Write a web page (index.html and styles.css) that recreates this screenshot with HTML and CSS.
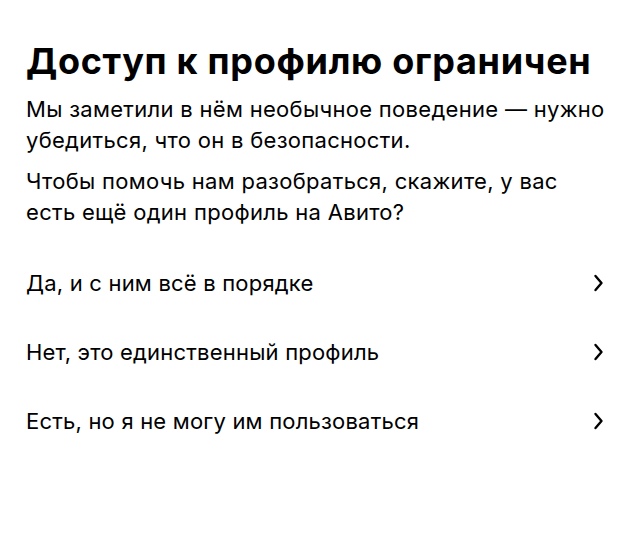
FILE: index.html
```html
<!DOCTYPE html>
<html lang="ru">
<head>
<meta charset="utf-8">
<link rel="stylesheet" href="styles.css">
</head>
<body>
<main class="page">
  <h1 class="title">Доступ к профилю ограничен</h1>
  <p class="text">Мы заметили в нём необычное поведение — нужно убедиться, что он в безопасности.</p>
  <p class="text">Чтобы помочь нам разобраться, скажите, у вас<br>есть ещё один профиль на Авито?</p>
  <ul class="options">
    <li class="option"><span>Да, и с ним всё в порядке</span><svg class="chev" viewBox="0 0 11 20" width="11" height="20"><path d="M2.5 3 L8.5 10 L2.5 17" fill="none" stroke="#000" stroke-width="2.4" stroke-linecap="round" stroke-linejoin="round"/></svg></li>
    <li class="option"><span>Нет, это единственный профиль</span><svg class="chev" viewBox="0 0 11 20" width="11" height="20"><path d="M2.5 3 L8.5 10 L2.5 17" fill="none" stroke="#000" stroke-width="2.4" stroke-linecap="round" stroke-linejoin="round"/></svg></li>
    <li class="option"><span>Есть, но я не могу им пользоваться</span><svg class="chev" viewBox="0 0 11 20" width="11" height="20"><path d="M2.5 3 L8.5 10 L2.5 17" fill="none" stroke="#000" stroke-width="2.4" stroke-linecap="round" stroke-linejoin="round"/></svg></li>
  </ul>
</main>
</body>
</html>
```
FILE: styles.css
```css
html, body {
  margin: 0;
  padding: 0;
  background: #fff;
}
body {
  font-family: Inter, Roboto, sans-serif;
  color: #000;
}
.page {
  padding: 38px 26px 0 26px;
}
.title {
  margin: 0 0 10px 0;
  font-size: 36px;
  font-weight: 700;
  line-height: 46px;
  letter-spacing: 0.7px;
}
.text {
  margin: 0 0 10px 0;
  font-size: 22px;
  line-height: 31px;
  letter-spacing: 0.3px;
}
.options {
  list-style: none;
  margin: 20px 0 0 0;
  padding: 0;
}
.option {
  display: flex;
  align-items: center;
  justify-content: space-between;
  height: 69px;
  font-size: 22px;
  letter-spacing: 0.2px;
  padding-right: 10px;
}
.chev {
  display: block;
}
```
